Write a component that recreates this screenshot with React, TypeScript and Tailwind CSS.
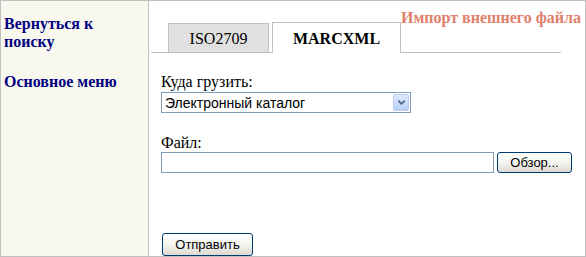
import { ChevronDown } from "lucide-react";

const serif = "font-['Liberation_Serif','Times_New_Roman',serif]";
const sans = "font-['Liberation_Sans',Arial,sans-serif]";

function XpButton({ label, width }: { label: string; width: string }) {
  return (
    <button
      type="button"
      className={`${width} h-full rounded-[3px] border border-[#003c74] bg-gradient-to-b from-white via-[#f4f4f0] to-[#dcdad0] text-[13px] leading-none text-black ${sans}`}
    >
      {label}
    </button>
  );
}

export default function App() {
  return (
    <div className="w-[586px] h-[257px] bg-white">
      <div className="flex h-full border border-[#c0c0c0]">
        {/* Sidebar */}
        <div className={`w-[148px] shrink-0 border-r border-[#c0c0c0] bg-[#f8f8ef] pl-[3px] pt-[14px] ${serif}`}>
          <div className="text-[16px] leading-[18px] font-bold text-[#000080]">
            Вернуться к<br />
            поиску
          </div>
          <div className="mt-[22px] text-[16px] leading-[18px] font-bold text-[#000080]">Основное меню</div>
        </div>

        {/* Content */}
        <div className="flex-1 flex flex-col">
          <div className="grid">
            <div className={`col-start-1 row-start-1 justify-self-end self-start pt-[8px] pr-[4px] text-[16px] leading-[17px] font-bold text-[#e0806c] ${serif}`}>
              Импорт внешнего файла
            </div>
            <div className={`col-start-1 row-start-1 mt-[21px] ml-[2px] flex items-end h-[31px] w-[410px] ${serif}`}>
              <div className="w-[17px] self-stretch border-b border-[#c0c0c0]" />
              <div className="w-[101px] h-[30px] border border-[#c0c0c0] bg-[#e0e0e0] pt-[6px] text-center text-[16px] leading-[18px] text-black">
                ISO2709
              </div>
              <div className="w-[3px] self-stretch border-b border-[#c0c0c0]" />
              <div className="w-[129px] h-[31px] border-l border-t border-r border-[#c0c0c0] bg-white pt-[7px] text-center text-[16px] leading-[18px] font-bold text-black">
                MARCXML
              </div>
              <div className="flex-1 self-stretch border-b border-[#c0c0c0]" />
            </div>
          </div>

          <div className="pl-[12px] pt-[20px]">
            <div className={`text-[16px] leading-[18px] text-black ${serif}`}>Куда грузить:</div>
            <div className="mt-[1px] flex items-center w-[250px] h-[21px] border border-[#7f9db9] bg-white">
              <span className={`flex-1 pl-[3px] text-[14px] leading-none text-black ${sans}`}>Электронный каталог</span>
              <span className="mr-[1px] flex items-center justify-center w-[16px] h-[17px] rounded-[2px] border border-[#b9cdf4] bg-gradient-to-b from-[#dde8fd] to-[#b9cff9]">
                <ChevronDown size={11} strokeWidth={3.5} className="text-[#4d6185]" />
              </span>
            </div>

            <div className={`mt-[21px] text-[16px] leading-[18px] text-black ${serif}`}>Файл:</div>
            <div className="flex h-[21px] gap-[3px]">
              <div className="w-[333px] h-full border border-[#7f9db9] bg-white" />
              <XpButton label="Обзор..." width="w-[75px]" />
            </div>

            <div className="mt-[58px] ml-[1px] h-[23px]">
              <XpButton label="Отправить" width="w-[91px]" />
            </div>
          </div>
        </div>
      </div>
    </div>
  );
}
